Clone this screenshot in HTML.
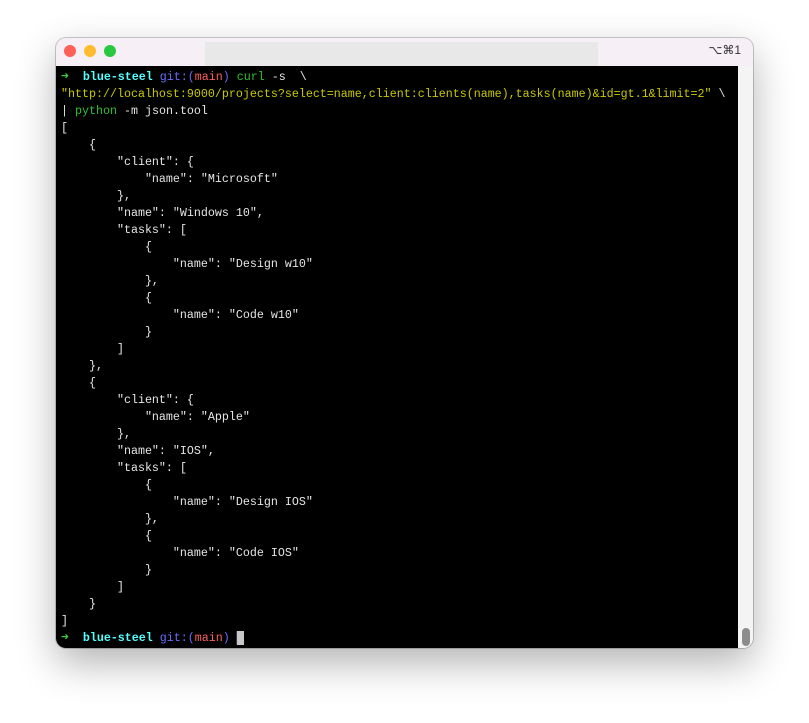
<!DOCTYPE html>
<html><head><style>
body{margin:0;width:809px;height:723px;background:#fff;position:relative;overflow:hidden;font-family:"Liberation Sans",sans-serif}
.win{position:absolute;left:56px;top:38px;width:697px;height:610px;border-radius:10px;background:#f6eff5;box-shadow:0 15px 40px rgba(0,0,0,.3),0 0 0 1px rgba(0,0,0,.2);overflow:hidden}
.dot{position:absolute;top:7px;width:12px;height:12px;border-radius:50%}
.tab{position:absolute;left:149px;top:4px;width:393px;height:24px;background:#e8e8e8}
.kbd{position:absolute;right:12px;top:5px;font-size:12px;color:#333}
.term{position:absolute;left:0;top:28px;width:682px;height:582px;background:#000}
.sb{position:absolute;left:682px;top:28px;width:15px;height:582px;background:#f4f4f4}
.thumb{position:absolute;left:686px;top:590px;width:8px;height:18px;border-radius:4px;background:#8c8c8c}
pre{position:absolute;left:5px;top:31px;margin:0;font-family:"Liberation Mono",monospace;font-size:11.67px;line-height:17px;color:#e5e5e5}
.g{color:#3ec93e;font-size:13px;line-height:10px}.c{color:#5ff;font-weight:bold}.b{color:#6b6bff}.r{color:#ff5f5f}.y{color:#c9c900}.gr{color:#2ec02e}
.cur{background:#c7c7c7;color:#c7c7c7}
</style></head><body>
<div class="win">
<div class="dot" style="left:8px;background:#fe5f57"></div>
<div class="dot" style="left:28px;background:#febc2e"></div>
<div class="dot" style="left:48px;background:#28c840"></div>
<div class="tab"></div>
<div class="kbd">⌥⌘1</div>
<div class="term"></div>
<div class="sb"></div>
<div class="thumb"></div>
<pre><span class="g">➜</span>  <span class="c">blue-steel</span> <span class="b">git:(</span><span class="r">main</span><span class="b">)</span> <span class="gr">curl</span> -s  \
<span class="y">"http://localhost:9000/projects?select=name,client:clients(name),tasks(name)&amp;id=gt.1&amp;limit=2"</span> \
| <span class="gr">python</span> -m json.tool
[
    {
        "client": {
            "name": "Microsoft"
        },
        "name": "Windows 10",
        "tasks": [
            {
                "name": "Design w10"
            },
            {
                "name": "Code w10"
            }
        ]
    },
    {
        "client": {
            "name": "Apple"
        },
        "name": "IOS",
        "tasks": [
            {
                "name": "Design IOS"
            },
            {
                "name": "Code IOS"
            }
        ]
    }
]
<span class="g">➜</span>  <span class="c">blue-steel</span> <span class="b">git:(</span><span class="r">main</span><span class="b">)</span> <span class="cur">&#9608;</span></pre>
</div>
</body></html>
